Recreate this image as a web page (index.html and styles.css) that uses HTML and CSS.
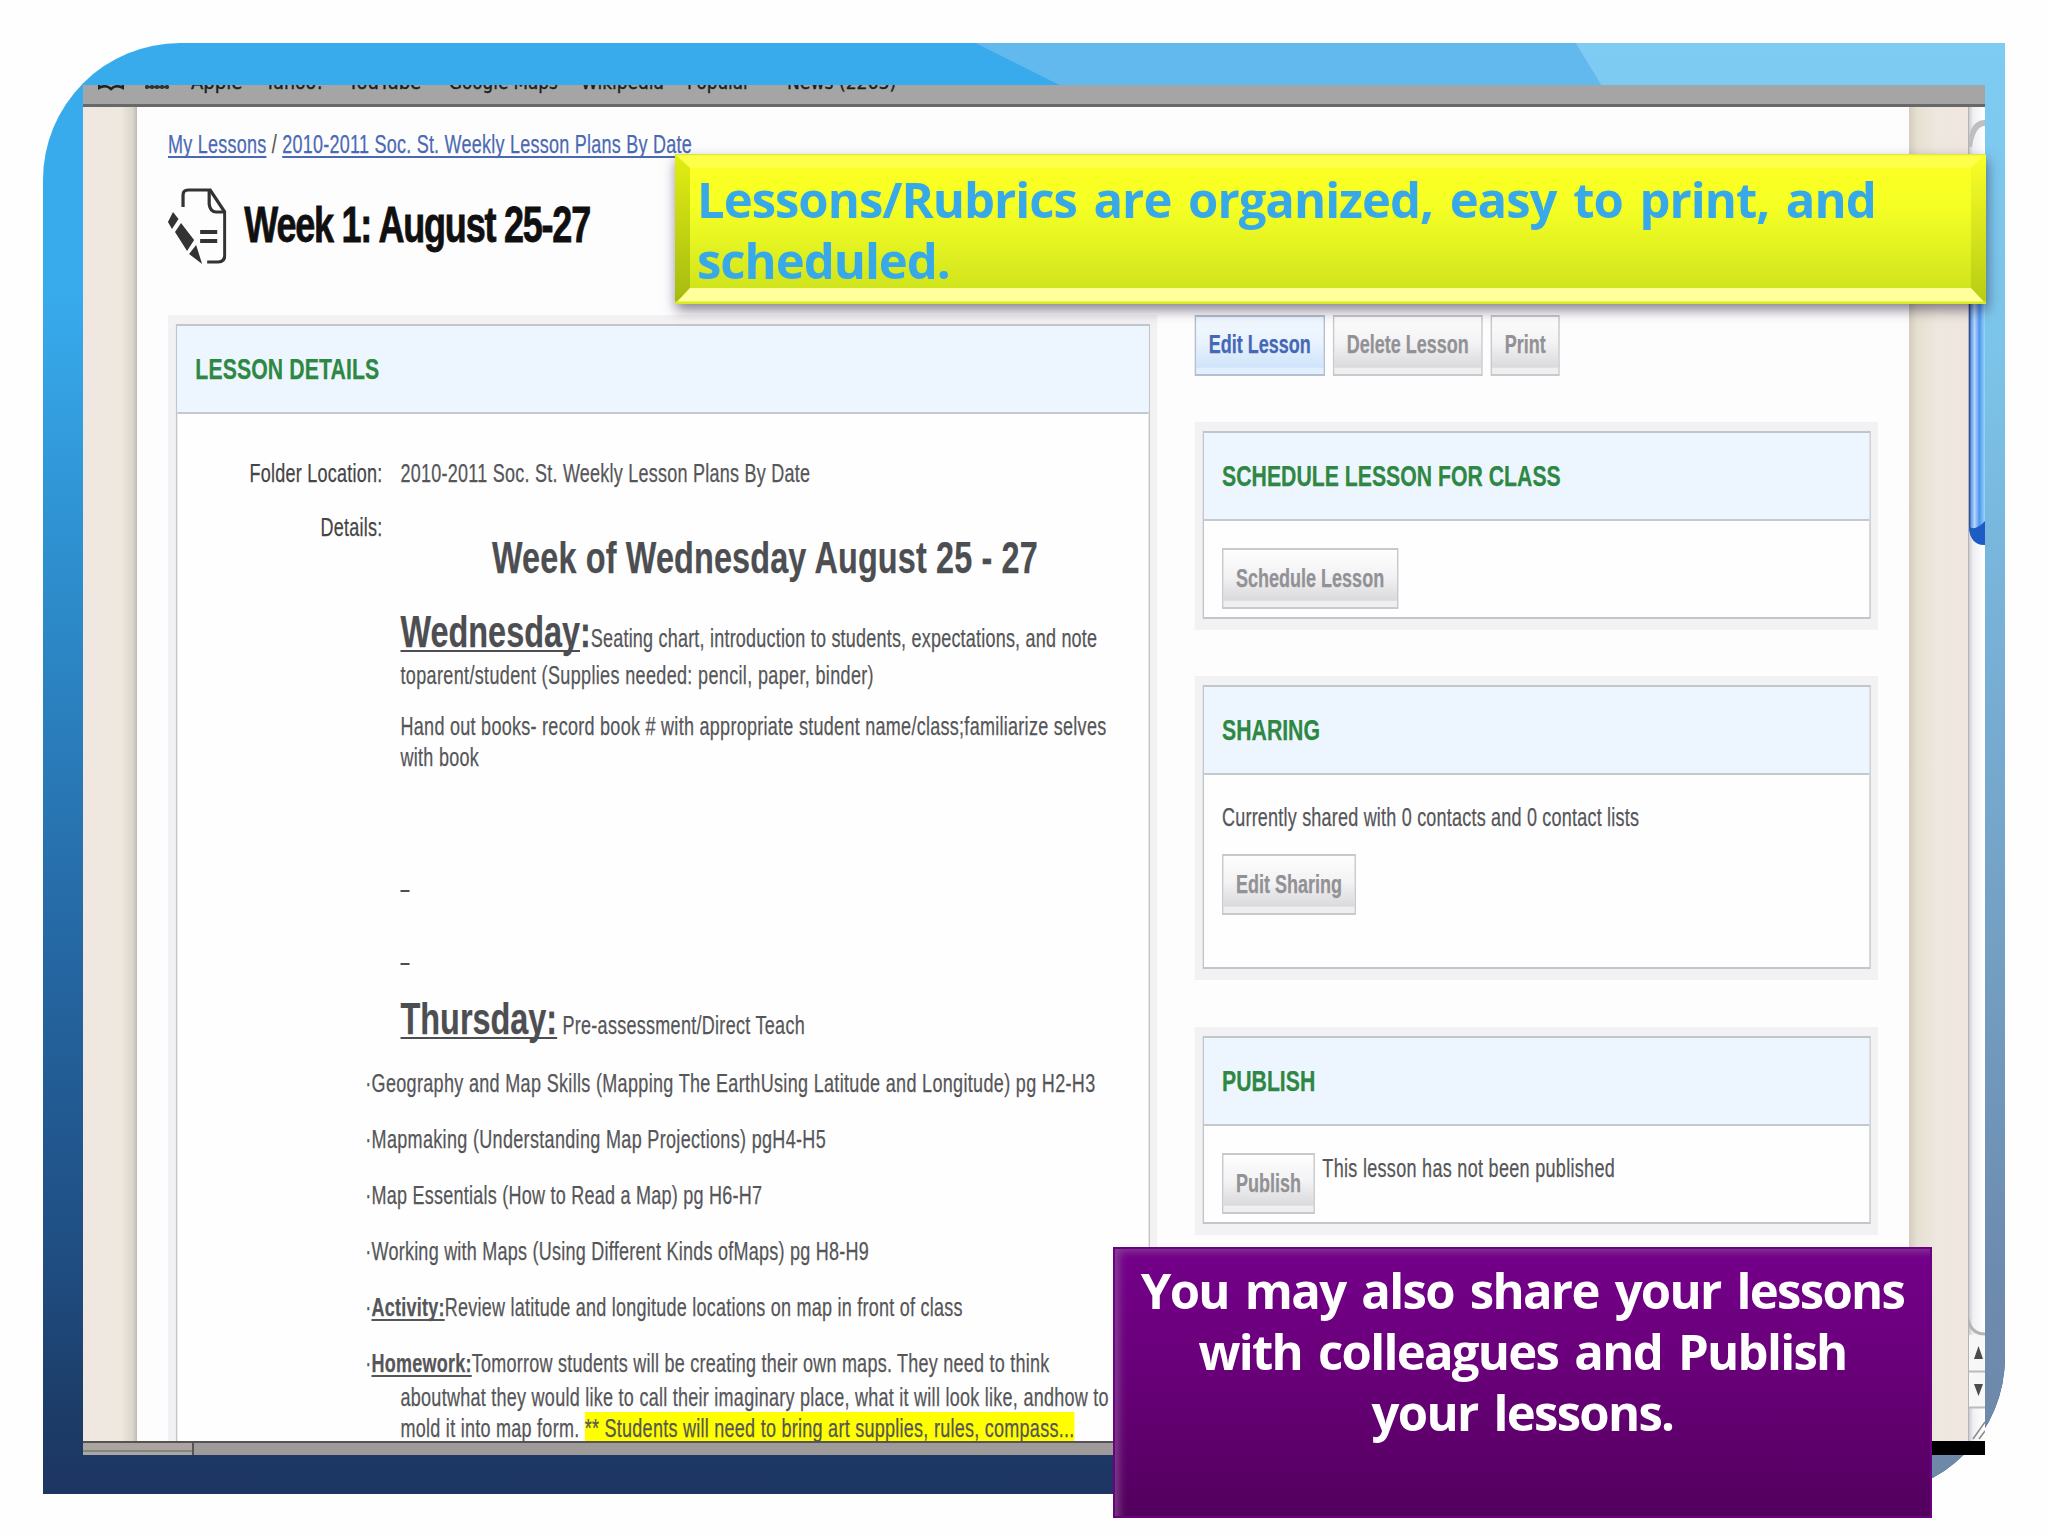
FILE: index.html
```html
<!DOCTYPE html>
<html lang="en">
<head>
<meta charset="utf-8">
<title>Week 1: August 25-27</title>
<link rel="stylesheet" href="styles.css">
</head>
<body>
<main class="slide">
  <div class="frame">
    <div class="band band-mid"></div>
    <div class="band band-light"></div>
  </div>

  <section class="browser">
    <div class="bookmarks">
      <svg class="bm-icon book" viewBox="0 0 26 10"><path d="M1 0V6Q8 2 13 7Q18 2 25 6V0M4 0V3M22 0V3" fill="none" stroke="#222" stroke-width="2.5"/></svg>
      <svg class="bm-icon grid" viewBox="0 0 24 10"><path d="M0 5H24M2 0V7M7 0V7M12 0V7M17 0V7M22 0V7" fill="none" stroke="#333" stroke-width="2.5"/></svg>
      <span class="bm bm-apple">Apple</span><span class="bm bm-yahoo">Yahoo!</span><span class="bm bm-youtube">YouTube</span><span class="bm bm-maps">Google Maps</span><span class="bm bm-wiki">Wikipedia</span><span class="bm bm-popular">Popular</span><span class="bm bm-news">News (2263)</span>
    </div>

    <div class="viewport">
      <div class="gutter gutter-left"></div>
      <div class="sheet-clip">
        <div class="sheet">
          <nav class="crumbs"><a>My Lessons</a> / <a>2010-2011 Soc. St. Weekly Lesson Plans By Date</a></nav>
          <header class="title-row">
            <svg class="title-icon" viewBox="0 0 58 77" preserveAspectRatio="none">
              <path d="M15 20V8Q15 3 20 3H42L56.500 25V68Q56.500 75 50 75H39" fill="none" stroke="#333" stroke-width="3.200"/>
              <path d="M41 3V17Q42 25 48 25H57" fill="none" stroke="#333" stroke-width="3.200"/>
              <path d="M32 45H49M32 54H49" stroke="#333" stroke-width="4"/>
              <path d="M0 35L5 25L10.500 32L4 42ZM7 45L13 36L26 53L19 64ZM21 67L28 58L34 77Z" fill="#333"/>
            </svg>
            <h1>Week 1: August 25-27</h1>
          </header>

          <div class="columns">
            <section class="panel lesson">
              <div class="panel-inner">
                <h2>LESSON DETAILS</h2>
                <div class="fields">
                  <div class="label">Folder Location:</div>
                  <div class="value">2010-2011 Soc. St. Weekly Lesson Plans By Date</div>
                  <div class="label details-label">Details:</div>
                  <div class="details">
                    <h3>Week of Wednesday August 25 - 27</h3>
                    <div class="day wed"><b><u>Wednesday</u>:</b>Seating chart, introduction to students, expectations, and note</div>
                    <div class="wed-more">toparent/student (Supplies needed: pencil, paper, binder)</div>
                    <div class="books">Hand out books- record book # with appropriate student name/class;familiarize selves<br>with book</div>
                    <div class="day blank-one"><b><u>&nbsp;</u></b></div>
                    <div class="day blank-two"><b><u>&nbsp;</u></b></div>
                    <div class="day thu"><b><u>Thursday:</u></b> Pre-assessment/Direct Teach</div>
                    <ul>
                      <li class="wide">·Geography and Map Skills (Mapping The EarthUsing Latitude and Longitude) pg H2-H3</li>
                      <li class="wide">·Mapmaking (Understanding Map Projections) pgH4-H5</li>
                      <li>·Map Essentials (How to Read a Map) pg H6-H7</li>
                      <li>·Working with Maps (Using Different Kinds ofMaps) pg H8-H9</li>
                      <li>·<strong>Activity:</strong>Review latitude and longitude locations on map in front of class</li>
                      <li>·<strong>Homework:</strong>Tomorrow students will be creating their own maps. They need to think
                        <div class="hang">aboutwhat they would like to call their imaginary place, what it will look like, andhow to<br>mold it into map form. <mark>** Students will need to bring art supplies, rules, compass...</mark></div></li>
                    </ul>
                  </div>
                </div>
              </div>
            </section>

            <aside>
              <div class="actions">
                <button class="btn primary">Edit Lesson</button>
                <button class="btn">Delete Lesson</button>
                <button class="btn">Print</button>
              </div>
              <section class="panel schedule">
                <div class="panel-inner">
                  <h2>SCHEDULE LESSON FOR CLASS</h2>
                  <div class="panel-body"><button class="btn">Schedule Lesson</button></div>
                </div>
              </section>
              <section class="panel sharing">
                <div class="panel-inner">
                  <h2>SHARING</h2>
                  <div class="panel-body"><p>Currently shared with 0 contacts and 0 contact lists</p><button class="btn">Edit Sharing</button></div>
                </div>
              </section>
              <section class="panel publish">
                <div class="panel-inner">
                  <h2>PUBLISH</h2>
                  <div class="panel-body"><button class="btn">Publish</button><p>This lesson has not been published</p></div>
                </div>
              </section>
            </aside>
          </div>
        </div>
      </div>
      <div class="gutter gutter-right"></div>
      <div class="scrollbar">
        <svg viewBox="0 0 17 1334">
          <defs>
            <linearGradient id="track" x1="0" x2="1" y1="0" y2="0"><stop offset="0" stop-color="#c4c4c8"/><stop offset=".3" stop-color="#f0f0f4"/><stop offset="1" stop-color="#fff"/></linearGradient>
            <linearGradient id="thumb" x1="0" x2="1" y1="0" y2="0"><stop offset="0" stop-color="#1c3a86"/><stop offset=".15" stop-color="#6fa0e8"/><stop offset=".35" stop-color="#b4d6fb"/><stop offset=".65" stop-color="#4f95ee"/><stop offset="1" stop-color="#9ad8ff"/></linearGradient>
          </defs>
          <rect width="17" height="1334" fill="url(#track)"/>
          <path d="M1 30Q4 13 17 13V19Q7 19 4 40H1Z" fill="#bfbfc2"/>
          <path d="M1 100H17V438Q2 438 1 420Z" fill="url(#thumb)"/>
          <path d="M1 420Q8 424 17 414V438Q2 438 1 420Z" fill="#1d5cc4"/>
          <path d="M0 1228V1301H17V1227Z" fill="#f7f7f7"/>
          <path d="M0 1212Q3 1227 17 1227" fill="none" stroke="#b4b4b4" stroke-width="3"/>
          <path d="M0 1264.500H17M0 1300.500H17" stroke="#bbb" stroke-width="2"/>
          <path d="M6 1252L10.500 1239L15 1252ZM6 1277L10.500 1289L15 1277Z" fill="#4c4c4c"/>
          <path d="M5 1332L17 1315M11 1332L17 1324" stroke="#888" stroke-width="1.500"/>
          <path d="M.5 0V1334" stroke="#b4b4b4"/>
        </svg>
      </div>
    </div>

    <footer class="statusbar"><div class="status-left"></div><div class="status-mid"></div><div class="status-end"></div></footer>
  </section>

  <div class="callout yellow">
    <svg class="bevel" viewBox="0 0 1312 150" preserveAspectRatio="none">
      <defs>
        <linearGradient id="face" x1="0" x2="0" y1="0" y2="1"><stop offset="0" stop-color="#ffff22"/><stop offset=".35" stop-color="#f5ff24"/><stop offset="1" stop-color="#c9df1c"/></linearGradient>
        <linearGradient id="sideL" x1="0" x2="0" y1="0" y2="1"><stop offset="0" stop-color="#e2ee12"/><stop offset="1" stop-color="#a4ba10"/></linearGradient>
        <linearGradient id="sideR" x1="0" x2="0" y1="0" y2="1"><stop offset="0" stop-color="#fbff28"/><stop offset="1" stop-color="#b5cc12"/></linearGradient>
      </defs>
      <rect width="1312" height="150" fill="url(#face)"/>
      <path d="M0 0H1312L1297 14H15Z" fill="#fdff48"/>
      <path d="M0 0L15 14V134L0 150Z" fill="url(#sideL)"/>
      <path d="M1312 0L1297 14V134L1312 150Z" fill="url(#sideR)"/>
      <path d="M0 150L15 134H1297L1312 150Z" fill="#ffff9c"/>
      <path d="M0 149H1312" stroke="#dcea20" stroke-width="3"/>
      <path d="M0 .5H1312" stroke="#dcea30" stroke-width="1.500"/>
    </svg>
    <p>Lessons/Rubrics are organized, easy to print, and<br>scheduled.</p>
  </div>

  <div class="callout purple"><p>You may also share your lessons<br>with colleagues and Publish<br>your lessons.</p></div>
</main>
</body>
</html>
```
FILE: styles.css
```css
* { box-sizing: border-box; }
body { margin: 0; background: #fefefe; font-family: "Liberation Sans", Arial, sans-serif; }
h1, h2, h3, p, ul { margin: 0; padding: 0; }

.slide { position: relative; width: 2048px; height: 1536px; overflow: hidden; padding: 85px 63px 0 83px; }

/* Coloured slide backdrop */
.frame {
  position: absolute; left: 42.5px; top: 42.5px; width: 1962.5px; height: 1451px; overflow: hidden;
  border-radius: 137px 0 137px 0;
  background: linear-gradient(180deg, #38abed 0, #38abed 17%, #2f93d3 33%, #2568a4 62%, #1f4c80 85%, #1c3d68 94%, #1d3562 100%);
}
.band { position: absolute; inset: 0; }
.band-mid { background: #61b9ee; clip-path: polygon(932px 0, 100% 0, 100% 60px, 1052px 60px); }
.band-light {
  background: linear-gradient(180deg, #7ecbf3 0, #7cc5ea 20%, #78b1d8 40%, #739dc0 65%, #6d8bae 85%, #6f88a8 100%);
  clip-path: polygon(1533px 0, 100% 0, 100% 100%, 1800px 100%, 1800px 440px);
}

.browser { position: relative; width: 1902px; height: 1370px; display: flex; flex-direction: column; overflow: hidden; }

.bookmarks { height: 22px; background: #a6a5a5; border-bottom: 3px solid #696868; display: flex; padding-left: 15px; overflow: hidden; font: 20px/24px "DejaVu Sans", sans-serif; color: #1c1c1c; white-space: nowrap; }
.bm { margin-top: -15px; flex: none; -webkit-text-stroke: .4px; transform-origin: 0 0; }
.bm-icon { height: 10px; flex: none; margin-top: -3px; }
.book { width: 26px; margin-right: 21px; }
.grid { width: 24px; margin-right: 22px; }
.bm-apple { width: 74px; transform: scaleX(.9); }
.bm-yahoo { width: 83px; transform: scaleX(.87); }
.bm-youtube { width: 101px; transform: scaleX(.9); }
.bm-maps { width: 132px; transform: scaleX(.84); }
.bm-wiki { width: 106px; transform: scaleX(.85); }
.bm-popular { width: 100px; transform: scaleX(.84); }
.bm-news { transform: scaleX(.86); }

.viewport { height: 1334px; display: flex; }
.gutter-left { width: 54px; background: linear-gradient(90deg, #f0e7e1 0, #eee8de 70%, #dad6cd 92%, #bdbab3 100%); }
.gutter-right { width: 59px; background: linear-gradient(90deg, #d3ccbf 0, #e6e0d2 14%, #efe8df 50%, #efe6e0 100%); }
.scrollbar { width: 17px; }
.scrollbar svg { display: block; width: 17px; height: 1334px; }
.sheet-clip { width: 1772px; height: 1334px; overflow: hidden; background: #fefdfe; }

/* The lesson page is shown horizontally condensed */
.sheet { width: 2461px; height: 1334px; transform: scaleX(.72); transform-origin: 0 0; padding: 22px 0 0 43px; overflow: hidden; font-size: 25px; line-height: 31px; letter-spacing: .34px; color: #555658; white-space: nowrap; -webkit-text-stroke: .25px; }
.crumbs { height: 31px; color: #555; }
.crumbs a { color: #4a69b4; text-decoration: underline; text-underline-offset: 3px; text-decoration-thickness: 2px; text-decoration-skip-ink: none; }
.title-row { height: 155px; padding-top: 27px; display: flex; align-items: flex-start; gap: 25px; }
.title-icon { width: 81px; height: 77px; }
h1 { font-size: 50px; line-height: 60px; margin-top: 8px; letter-spacing: -1.7px; color: #101010; -webkit-text-stroke: .8px; }

.columns { display: flex; gap: 52px; align-items: flex-start; }
.panel { background: #f2f1f3; padding: 9px 10px 11px 11px; }
.panel-inner { background: #fffeff; border: 2px solid #c3c6c9; border-width: 2px 2.500px; }
.panel h2 { height: 88px; background: #edf6fe; border-bottom: 2px solid #c3cacd; padding: 26px 0 0 25px; font-size: 29.500px; line-height: 34px; letter-spacing: 0; color: #2e8742; }
.lesson h2 { letter-spacing: .15px; }
.lesson { width: 1374px; height: 1300px; }
.lesson .panel-inner { height: 1280px; }
.fields { display: grid; grid-template-columns: 285px 1fr; column-gap: 25px; padding-top: 44px; }
.label { text-align: right; color: #444547; }
.details-label { padding-top: 23px; }

.details { padding-top: 43px; }
h3 { font-size: 45px; line-height: 52px; letter-spacing: .2px; color: #4c4e51; margin-left: 127px; }
.day { height: 38px; }
.day b { font-size: 45px; line-height: 31px; letter-spacing: 0; color: #4c4e51; }
.day u, .details strong { text-decoration: underline; text-underline-offset: 3px; text-decoration-thickness: 2px; text-decoration-skip-ink: none; }
.wed { margin-top: 32px; letter-spacing: .29px; }
.wed-more { margin-top: 6px; letter-spacing: .49px; }
.books { margin-top: 20px; letter-spacing: .39px; }
.blank-one { margin-top: 83px; }
.blank-two { margin-top: 35px; }
.thu { margin-top: 36px; letter-spacing: .4px; }
ul { list-style: none; margin: 27px 0 0 -49px; }
li { margin-bottom: 25px; }
li.wide { letter-spacing: .46px; }
.hang { margin: 3px 0 0 49px; letter-spacing: .37px; }
mark { background: #ffff00; color: inherit; padding-top: 2px; }

aside { width: 949px; }
.actions { display: flex; gap: 11px; height: 60px; margin-bottom: 47px; }
.btn { height: 61px; padding: 0 17.500px 2px; border: 2px solid #c9c9cc; font: bold 25px/30px "Liberation Sans", Arial, sans-serif; letter-spacing: 0; color: #929195; background: linear-gradient(180deg, #fefefe 0, #f3f2f4 45%, #dad9dc 88%, #efeff1 90%); white-space: nowrap; }
.actions .btn { padding-bottom: 4px; }
.btn.primary { color: #4568b6; border-color: #b4c0d0; background: linear-gradient(180deg, #f2f8fe 0, #e9f3fe 45%, #cfe3fa 88%, #e2effc 90%); }
.panel-body { padding: 27px 0 0 25px; letter-spacing: .29px; }
.schedule { height: 208px; margin-bottom: 46px; }
.schedule .panel-inner { height: 188px; }
.sharing { height: 304px; margin-bottom: 47px; }
.sharing .panel-inner { height: 284px; }
.sharing p { margin-bottom: 21px; }
.publish { height: 208px; }
.publish .panel-inner { height: 188px; }
.publish .panel-body { display: flex; gap: 10px; letter-spacing: .43px; }

.statusbar { height: 14px; border-top: 2px solid #555353; background: #9f9b9b; display: flex; }
.status-left { width: 111px; border-right: 2px solid #555; background: linear-gradient(180deg, #aaa69f 0 7px, #858380 7px 9px, #aaa8a6 9px); }
.status-mid { flex: 1; }
.status-end { width: 60px; margin-top: -2px; background: #000; }

.callout { position: absolute; }
.callout p { position: relative; font: 700 49px/61px "Open Sans", sans-serif; letter-spacing: -1px; word-spacing: 5px; white-space: nowrap; }
.yellow { left: 675px; top: 154px; width: 1311px; height: 150px; color: #38a9e8; box-shadow: 1px 6px 12px rgba(20,10,40,.5); padding: 15px 0 0 22px; }
.bevel { position: absolute; inset: 0; width: 100%; height: 100%; }
.purple { left: 1113px; top: 1247px; width: 819px; height: 271px; padding-top: 11px; text-align: center; color: #fff; border: 2px solid #6a0180; background: linear-gradient(180deg, #74008a 0, #690079 45%, #53005e 100%); box-shadow: inset 7px 5px 8px -3px rgba(150,110,160,.6); }
.purple p { letter-spacing: -1.700px; }
```
